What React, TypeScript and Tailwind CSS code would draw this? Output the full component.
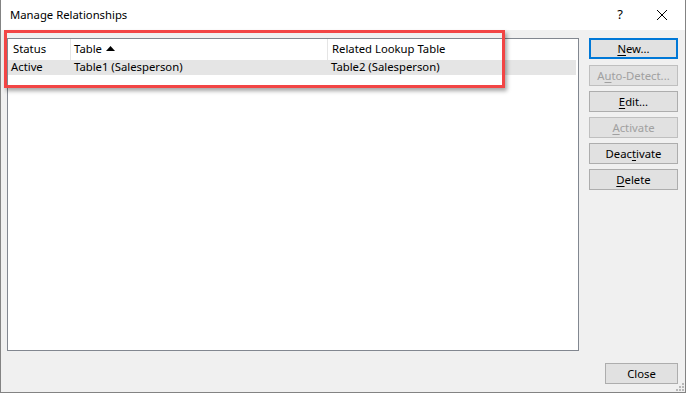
import React from "react";

const font = { fontFamily: '"Noto Sans", "Open Sans", sans-serif' };

function DlgButton({
  label,
  underline,
  disabled,
  focused,
  className = "",
}: {
  label: string;
  underline?: number;
  disabled?: boolean;
  focused?: boolean;
  className?: string;
}) {
  const hasMark = underline !== undefined;
  const before = hasMark ? label.slice(0, underline) : label;
  const ch = hasMark ? label.charAt(underline!) : "";
  const after = hasMark ? label.slice(underline! + 1) : "";
  return (
    <div
      className={
        "flex h-[21px] items-center justify-center bg-[#e1e1e1] text-[11.3px] leading-none " +
        (focused
          ? "border-2 border-[#0078d7] text-black "
          : disabled
          ? "border border-[#bfbfbf] text-[#a0a0a0] "
          : "border border-[#adadad] text-black ") +
        className
      }
    >
      <span>
        {before}
        {hasMark && <span className="underline underline-offset-[2px]">{ch}</span>}
        {after}
      </span>
    </div>
  );
}

function CloseIcon() {
  return (
    <svg width="12" height="12" viewBox="0 0 12 12" className="block">
      <path d="M1 1 L11 11 M11 1 L1 11" stroke="#000" strokeWidth="1" fill="none" />
    </svg>
  );
}

function Grip() {
  const dots = [
    [6, 0],
    [3, 3],
    [6, 3],
    [0, 6],
    [3, 6],
    [6, 6],
  ];
  return (
    <svg width="8" height="8" viewBox="0 0 8 8" className="absolute bottom-[1px] right-[1px]">
      {dots.map(([x, y], i) => (
        <rect key={i} x={x} y={y} width="2" height="2" fill="#b8b8b8" />
      ))}
    </svg>
  );
}

export default function App() {
  return (
    <div
      style={font}
      className="relative flex h-[393px] w-[686px] flex-col overflow-hidden border-x border-b border-[#838383] bg-[#f0f0f0] text-black"
    >
      {/* Title bar */}
      <div className="flex h-[30px] shrink-0 items-center bg-white">
        <span className="ml-[9px] text-[11.3px]">Manage Relationships</span>
        <span className="ml-auto mr-[33px] text-[13px]">?</span>
        <div className="mr-[17px]">
          <CloseIcon />
        </div>
      </div>

      {/* Body */}
      <div className="flex flex-1">
        <div className="ml-[6px] mt-[8px] h-[313px] w-[572px] border border-[#828790] bg-white text-[11.3px]">
          <div className="flex h-[21px] items-center">
            <div className="flex h-full w-[63px] items-center border-r border-[#e5e5e5] pl-[5px]">
              Status
            </div>
            <div className="flex h-full w-[257px] items-center border-r border-[#e5e5e5] pl-[3px]">
              Table
              <svg width="9" height="5" viewBox="0 0 9 5" className="ml-[4px] mb-[2px]">
                <path d="M0 5 L4.5 0 L9 5 Z" fill="#000" />
              </svg>
            </div>
            <div className="pl-[4px]">Related Lookup Table</div>
          </div>
          <div className="flex h-[15px] w-[568px] items-center bg-[#e5e5e5]">
            <div className="w-[66px] pl-[3px]">Active</div>
            <div className="w-[257px]">Table1 (Salesperson)</div>
            <div>Table2 (Salesperson)</div>
          </div>
        </div>

        <div className="ml-[10px] mt-[8px] flex w-[89px] flex-col gap-[5px]">
          <DlgButton label="New..." underline={0} focused />
          <DlgButton label="Auto-Detect..." underline={1} disabled className="mt-[1px]" />
          <DlgButton label="Edit..." underline={0} />
          <DlgButton label="Activate" underline={0} disabled />
          <DlgButton label="Deactivate" underline={4} />
          <DlgButton label="Delete" underline={0} />
        </div>
      </div>

      <div className="flex justify-end pb-[8px] pr-[7px]">
        <DlgButton label="Close" className="w-[73px]" />
      </div>

      <Grip />

      {/* annotation highlight */}
      <div className="pointer-events-none absolute left-[3px] top-[30px] h-[58px] w-[501px] border-[3px] border-[#f24545] shadow-[2px_3px_4px_rgba(0,0,0,0.35)]" />
    </div>
  );
}
